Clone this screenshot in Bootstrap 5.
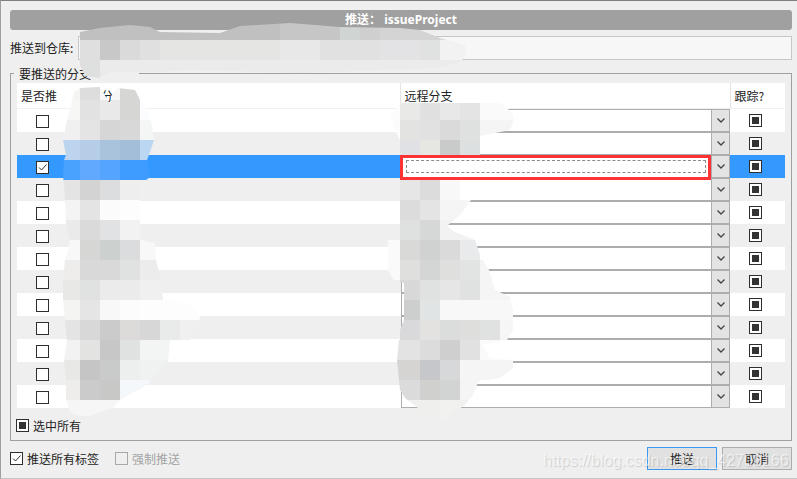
<!DOCTYPE html>
<html lang="zh"><head><meta charset="utf-8"><title>推送</title>
<link href="https://cdn.jsdelivr.net/npm/bootstrap@5.3.0/dist/css/bootstrap.min.css" rel="stylesheet">
<style>
html,body{margin:0;background:#efefef}
body{width:797px;height:479px;overflow:hidden;font:12px/16px "Noto Sans CJK SC","Noto Sans",sans-serif;color:#222}
.dlg{position:relative;width:797px;height:479px;background:#efefef;border-top:1px solid #7f7f7f;border-left:1px solid #a0a0a0;border-bottom:1px solid #c4c4c4;padding:9px 5px 0 9px}
.ttl{height:20px;background:#a0a0a0;border-radius:3px;color:#fff;font:700 12px/20px "Noto Sans","Noto Sans CJK SC",sans-serif;text-align:center}
.repo{height:24px;margin-top:6px}
.repo-lbl{width:68px}
.repo-in{height:24px;border:1px solid #c8c8c8;border-radius:0;background:#f7f7f7;padding:0 4px;font-size:12px}
.grp{position:relative;height:368px;margin-top:13px;border:1px solid #a0a0a0;padding:9px 6px 0}
.grp-t{position:absolute;left:3px;top:-8px;width:125px;padding-left:5px;background:#efefef;line-height:16px}
.brt{table-layout:fixed;width:768px;margin:0;color:#222;font-size:12px;line-height:16px}
.brt>:not(caption)>*>*{padding:0;border:0;box-shadow:none;color:inherit;vertical-align:middle}
.brt thead th{height:25px;font-weight:400;background:#fff;border-bottom:1px solid #f0f0f0;padding:2px 4px 0}
.brt thead .sep{border-left:1px solid #e4e4e4}
.brt tbody td{height:23px}
.brt tbody tr:nth-child(odd)>td{background:#fff}
.brt tbody tr:nth-child(even)>td{background:#efefef}
.brt tbody tr.on>td{background:#39f}
.cb{display:block;appearance:none;margin:0;width:13px;height:13px;border:1px solid #2e2e2e;background:#fff no-repeat center}
.cb-tick{background-image:url("data:image/svg+xml,%3Csvg xmlns='http://www.w3.org/2000/svg' width='11' height='11'%3E%3Cpath d='M2 5.5l2.5 2.5L9.5 2.5' fill='none' stroke='%23333' stroke-width='1'/%3E%3C/svg%3E")}
.cb-tri{background-image:linear-gradient(#333,#333);background-size:7px 7px}
.cb-off{border-color:#a8a8a8;background:#efefef}
.brt td>.cb-l{margin:2px 0 0 19px}
.brt td>.cb-t{margin:0 0 0 19px}
.cmb{position:relative;display:flex;height:23px;width:329px;margin-left:1px;background:#fff;border:1px solid #adadad}
.cmb-txt{flex:1 1 auto}
.cmb-arr{display:flex;align-items:center;justify-content:center;width:18px;background:#e3e3e3;border-left:1px solid #adadad}
.red{position:absolute;z-index:2;left:-2px;top:-1px;width:311px;height:25px;border:3px solid #f33;background:#fff;padding:2px 2px 2px 3px}
.red i{display:block;height:13px;border:1px dashed #8a8a8a}
.sel-all{margin:10px 0 0 -1px;height:16px}
.foot{height:23px;margin-top:6px}
.t-off{color:#a4a4a4}
.act{width:70px;height:23px;padding:0;border-radius:0;background:#e1e1e1;border:1px solid #adadad;color:#222;font-size:12px;line-height:20px}
.act+.act{margin-left:5px}
.act-on{border-color:#3d98f2}
.mos{position:absolute;left:-1px;top:-1px;z-index:1;pointer-events:none}
.wm{position:absolute;z-index:3;left:542px;top:450px;font:16px/20px "Liberation Sans",sans-serif;color:rgba(255,255,255,.62);text-shadow:1px 1px 1px rgba(0,0,0,.14);white-space:nowrap;pointer-events:none}
</style></head><body>
<div class="dlg">
 <div class="ttl">推送： issueProject</div>
 <div class="repo d-flex align-items-center"><div class="repo-lbl flex-shrink-0">推送到仓库:</div><input class="form-control repo-in" type="text" readonly></div>
 <div class="grp">
  <div class="grp-t">要推送的分支</div>
  <table class="table brt">
   <colgroup><col style="width:56px"><col style="width:327px"><col style="width:330px"><col style="width:55px"></colgroup>
   <thead><tr><th>是否推</th><th>本地分支</th><th class="sep">远程分支</th><th class="sep">跟踪?</th></tr></thead>
   <tbody>
    <tr><td><input type="checkbox" class="cb cb-l"></td><td></td><td><div class="cmb"><div class="cmb-txt"></div><div class="cmb-arr"><svg width="8" height="5"><path d="M.5.5L4 4 7.500.5" fill="none" stroke="#444" stroke-width="1.300"/></svg></div></div></td><td><span class="cb cb-tri cb-t d-block"></span></td></tr>
    <tr><td><input type="checkbox" class="cb cb-l"></td><td></td><td><div class="cmb"><div class="cmb-txt"></div><div class="cmb-arr"><svg width="8" height="5"><path d="M.5.5L4 4 7.500.5" fill="none" stroke="#444" stroke-width="1.300"/></svg></div></div></td><td><span class="cb cb-tri cb-t d-block"></span></td></tr>
    <tr class="on"><td><span class="cb cb-l cb-tick d-block"></span></td><td></td><td><div class="cmb"><div class="cmb-txt"></div><div class="red"><i></i></div><div class="cmb-arr"><svg width="8" height="5"><path d="M.5.5L4 4 7.500.5" fill="none" stroke="#444" stroke-width="1.300"/></svg></div></div></td><td><span class="cb cb-tri cb-t d-block"></span></td></tr>
    <tr><td><input type="checkbox" class="cb cb-l"></td><td></td><td><div class="cmb"><div class="cmb-txt"></div><div class="cmb-arr"><svg width="8" height="5"><path d="M.5.5L4 4 7.500.5" fill="none" stroke="#444" stroke-width="1.300"/></svg></div></div></td><td><span class="cb cb-tri cb-t d-block"></span></td></tr>
    <tr><td><input type="checkbox" class="cb cb-l"></td><td></td><td><div class="cmb"><div class="cmb-txt"></div><div class="cmb-arr"><svg width="8" height="5"><path d="M.5.5L4 4 7.500.5" fill="none" stroke="#444" stroke-width="1.300"/></svg></div></div></td><td><span class="cb cb-tri cb-t d-block"></span></td></tr>
    <tr><td><input type="checkbox" class="cb cb-l"></td><td></td><td><div class="cmb"><div class="cmb-txt"></div><div class="cmb-arr"><svg width="8" height="5"><path d="M.5.5L4 4 7.500.5" fill="none" stroke="#444" stroke-width="1.300"/></svg></div></div></td><td><span class="cb cb-tri cb-t d-block"></span></td></tr>
    <tr><td><input type="checkbox" class="cb cb-l"></td><td></td><td><div class="cmb"><div class="cmb-txt"></div><div class="cmb-arr"><svg width="8" height="5"><path d="M.5.5L4 4 7.500.5" fill="none" stroke="#444" stroke-width="1.300"/></svg></div></div></td><td><span class="cb cb-tri cb-t d-block"></span></td></tr>
    <tr><td><input type="checkbox" class="cb cb-l"></td><td></td><td><div class="cmb"><div class="cmb-txt"></div><div class="cmb-arr"><svg width="8" height="5"><path d="M.5.5L4 4 7.500.5" fill="none" stroke="#444" stroke-width="1.300"/></svg></div></div></td><td><span class="cb cb-tri cb-t d-block"></span></td></tr>
    <tr><td><input type="checkbox" class="cb cb-l"></td><td></td><td><div class="cmb"><div class="cmb-txt"></div><div class="cmb-arr"><svg width="8" height="5"><path d="M.5.5L4 4 7.500.5" fill="none" stroke="#444" stroke-width="1.300"/></svg></div></div></td><td><span class="cb cb-tri cb-t d-block"></span></td></tr>
    <tr><td><input type="checkbox" class="cb cb-l"></td><td></td><td><div class="cmb"><div class="cmb-txt"></div><div class="cmb-arr"><svg width="8" height="5"><path d="M.5.5L4 4 7.500.5" fill="none" stroke="#444" stroke-width="1.300"/></svg></div></div></td><td><span class="cb cb-tri cb-t d-block"></span></td></tr>
    <tr><td><input type="checkbox" class="cb cb-l"></td><td></td><td><div class="cmb"><div class="cmb-txt"></div><div class="cmb-arr"><svg width="8" height="5"><path d="M.5.5L4 4 7.500.5" fill="none" stroke="#444" stroke-width="1.300"/></svg></div></div></td><td><span class="cb cb-tri cb-t d-block"></span></td></tr>
    <tr><td><input type="checkbox" class="cb cb-l"></td><td></td><td><div class="cmb"><div class="cmb-txt"></div><div class="cmb-arr"><svg width="8" height="5"><path d="M.5.5L4 4 7.500.5" fill="none" stroke="#444" stroke-width="1.300"/></svg></div></div></td><td><span class="cb cb-tri cb-t d-block"></span></td></tr>
    <tr><td><input type="checkbox" class="cb cb-l"></td><td></td><td><div class="cmb"><div class="cmb-txt"></div><div class="cmb-arr"><svg width="8" height="5"><path d="M.5.5L4 4 7.500.5" fill="none" stroke="#444" stroke-width="1.300"/></svg></div></div></td><td><span class="cb cb-tri cb-t d-block"></span></td></tr>
   </tbody>
  </table>
  <div class="sel-all d-flex align-items-center gap-1"><span class="cb cb-tri"></span><span>选中所有</span></div>
 </div>
 <div class="foot d-flex align-items-center">
  <span class="cb cb-tick"></span><span class="ms-1">推送所有标签</span>
  <span class="cb cb-off ms-3"></span><span class="t-off ms-1">强制推送</span>
  <button type="button" class="btn act act-on ms-auto">推送</button>
  <button type="button" class="btn act">取消</button>
 </div>
 <svg class="mos" width="797" height="479" shape-rendering="crispEdges">
  <defs>
   <clipPath id="cA"><polygon points="80,32 100,28 130,25 150,27 160,32 220,33 240,26 290,23 340,27 400,28 420,30 440,38 465,45 467,55 460,62 440,68 300,73 190,70 160,72 110,72 100,78 85,76 80,65"/></clipPath>
   <clipPath id="cB"><polygon points="74,92 80,88 100,87 103,92 110,104 113,92 118,88 135,90 140,100 147,110 152,125 154,140 150,152 147,160 149,170 149,178 146,180 140,180 140,240 155,243 156,260 161,280 163,300 175,302 190,303 199,315 200,320 190,340 170,340 168,362 150,382 142,388 120,400 113,408 100,412 90,416 80,416 70,412 66,400 66,380 64,360 67,340 65,320 63,300 63,280 65,260 68,250 70,240 66,225 65,200 64,185 63,175 64,160 66,155 63,140 67,120"/></clipPath>
   <clipPath id="cC"><polygon points="400,103 500,103 512,112 514,120 510,130 480,136 480,155 460,180 460,200 471,200 460,215 447,226 455,232 475,240 480,255 489,270 495,290 510,297 513,310 513,330 507,340 482,345 490,358 513,360 513,368 500,378 478,382 473,395 465,405 450,415 440,420 430,420 420,415 418,408 405,398 400,390 397,360 398,350 400,330 404,320 404,283 395,282 388,270 388,240 400,236 400,140 395,130 390,115"/></clipPath>
  </defs>
  <g clip-path="url(#cA)">
   <path fill="#c0c0c0" d="M80 20h200v20H80z"/><path fill="#c6c6c6" d="M280 20h60v20h-60z"/><path fill="#d0d4d2" d="M340 20h20v20h-20z"/><path fill="#cfcfcf" d="M360 20h20v20h-20z"/><path fill="#d4d4d4" d="M380 20h60v20h-60z"/><path fill="#dadada" d="M440 20h30v20h-30z"/>
   <path fill="#dedfde" d="M80 40h20v20H80z"/><path fill="#c8c8c8" d="M100 40h20v20h-20z"/><path fill="#dadada" d="M120 40h20v20h-20z"/><path fill="#e0e0e0" d="M140 40h20v20h-20z"/><path fill="#e5e5e3" d="M160 40h120v20H160z"/><path fill="#e8e8e8" d="M280 40h40v20h-40z"/><path fill="#e1e1e1" d="M320 40h60v20h-60z"/><path fill="#e3e3e5" d="M380 40h40v20h-40z"/><path fill="#e0e2e2" d="M420 40h20v20h-20z"/><path fill="#f2f2f2" d="M440 40h30v20h-30z"/>
   <path fill="#dee0df" d="M80 60h20v20H80z"/><path fill="#ebebeb" d="M100 60h370v20H100z"/>
  </g>
  <g clip-path="url(#cB)">
   <path fill="#f5f5f4" d="M60 80h20v20H60z"/><path fill="#dddddd" d="M80 80h20v20H80z"/><path fill="#f7f7f7" d="M100 80h20v20h-20z"/><path fill="#d6d6d4" d="M120 80h20v20h-20z"/>
   <path fill="#f7f7f6" d="M60 100h20v20H60z"/><path fill="#e2e2e2" d="M80 100h20v20H80z"/><path fill="#e9e9e9" d="M100 100h20v20h-20z"/><path fill="#d6d6d4" d="M120 100h20v20h-20z"/><path fill="#fafcfd" d="M140 100h20v20h-20z"/>
   <path fill="#f0f0f0" d="M60 120h20v20H60z"/><path fill="#e4e4e4" d="M80 120h20v20H80z"/><path fill="#d6d6d6" d="M100 120h20v20h-20z"/><path fill="#d8d8d8" d="M120 120h20v20h-20z"/><path fill="#f4f5f5" d="M140 120h20v20h-20z"/>
   <path fill="#bcd4ee" d="M60 140h20v20H60z"/><path fill="#b5cde6" d="M80 140h20v20H80z"/><path fill="#a9c3dd" d="M100 140h20v20h-20z"/><path fill="#a3bed8" d="M120 140h20v20h-20z"/><path fill="#bbd6f2" d="M140 140h20v20h-20z"/>
   <path fill="#4aa2ff" d="M60 160h20v20H60z"/><path fill="#60a9ff" d="M80 160h20v20H80z"/><path fill="#55a5ff" d="M100 160h20v20h-20z"/><path fill="#3e9bff" d="M120 160h40v20h-40z"/>
   <path fill="#e4e4e4" d="M60 180h20v20H60z"/><path fill="#d3d3d3" d="M80 180h20v20H80z"/><path fill="#dcdddf" d="M100 180h20v20h-20z"/><path fill="#eeeeee" d="M120 180h20v20h-20z"/>
   <path fill="#f4f4f4" d="M60 200h20v20H60z"/><path fill="#e4e4e4" d="M80 200h20v20H80z"/><path fill="#fbfbfb" d="M100 200h20v20h-20z"/><path fill="#fdfdfd" d="M120 200h20v20h-20z"/>
   <path fill="#eaeaea" d="M60 220h20v20H60z"/><path fill="#dadada" d="M80 220h20v20H80z"/><path fill="#e0e2e4" d="M100 220h20v20h-20z"/><path fill="#f2f2f3" d="M120 220h20v20h-20z"/>
   <path fill="#f8f8f8" d="M60 240h20v20H60z"/><path fill="#d6d6d4" d="M80 240h20v20H80z"/><path fill="#ccd0cf" d="M100 240h20v20h-20z"/><path fill="#dadcde" d="M120 240h20v20h-20z"/><path fill="#f8f8f8" d="M140 240h20v20h-20z"/>
   <path fill="#eeedeb" d="M60 260h20v20H60z"/><path fill="#d9d9d9" d="M80 260h40v20H80z"/><path fill="#e0e2e2" d="M120 260h20v20h-20z"/><path fill="#ececec" d="M140 260h20v20h-20z"/>
   <path fill="#e8e8e6" d="M60 280h20v20H60z"/><path fill="#dfe2e1" d="M80 280h20v20H80z"/><path fill="#ebebeb" d="M100 280h40v20h-40z"/><path fill="#f0f0f0" d="M140 280h30v20h-30z"/>
   <path fill="#f4f4f2" d="M60 300h20v20H60z"/><path fill="#e5e5e5" d="M80 300h20v20H80z"/><path fill="#f8f8f8" d="M100 300h20v20h-20z"/><path fill="#fcfcfc" d="M120 300h20v20h-20z"/><path fill="#fdfdfd" d="M140 300h60v20h-60z"/>
   <path fill="#e4e4e4" d="M60 320h20v20H60z"/><path fill="#d8d8d8" d="M80 320h20v20H80z"/><path fill="#cbcbcb" d="M100 320h20v20h-20z"/><path fill="#dcdbd9" d="M120 320h20v20h-20z"/><path fill="#d7d7d7" d="M140 320h20v20h-20z"/><path fill="#e9ebeb" d="M160 320h20v20h-20z"/><path fill="#f0f0f0" d="M180 320h20v20h-20z"/>
   <path fill="#f2f2f2" d="M60 340h20v20H60z"/><path fill="#e3e3e1" d="M80 340h20v20H80z"/><path fill="#c7c7c7" d="M100 340h20v20h-20z"/><path fill="#dfe2e1" d="M120 340h20v20h-20z"/><path fill="#f3f5f5" d="M140 340h30v20h-30z"/>
   <path fill="#e8e8e6" d="M60 360h20v20H60z"/><path fill="#c5c5c5" d="M80 360h20v20H80z"/><path fill="#c8cbca" d="M100 360h20v20h-20z"/><path fill="#edefef" d="M120 360h20v20h-20z"/><path fill="#f0f1f1" d="M140 360h30v20h-30z"/>
   <path fill="#eeedeb" d="M60 380h20v20H60z"/><path fill="#cbcbcb" d="M80 380h20v20H80z"/><path fill="#c8c8c6" d="M100 380h20v20h-20z"/><path fill="#f5f8fb" d="M120 380h30v20h-30z"/>
   <path fill="#f6f6f6" d="M60 400h60v20H60z"/>
  </g>
  <g clip-path="url(#cC)">
   <path fill="#fcfcfc" d="M380 100h20v60h-20z"/><path fill="#e9e9e7" d="M400 100h20v20h-20z"/><path fill="#e0e0e0" d="M420 100h20v20h-20z"/><path fill="#e8e8e8" d="M440 100h20v20h-20z"/><path fill="#e4e4e4" d="M460 100h20v20h-20z"/><path fill="#fafafa" d="M480 100h40v20h-40z"/>
   <path fill="#e3e3e1" d="M400 120h20v20h-20z"/><path fill="#e1e1e1" d="M420 120h20v20h-20z"/><path fill="#dadada" d="M440 120h20v20h-20z"/><path fill="#dfe1e0" d="M460 120h20v20h-20z"/><path fill="#f5f5f5" d="M480 120h40v20h-40z"/>
   <path fill="#dfe1e4" d="M400 140h20v20h-20z"/><path fill="#e6e6e2" d="M420 140h20v20h-20z"/><path fill="#c9cbca" d="M440 140h20v20h-20z"/><path fill="#dde0e0" d="M460 140h20v20h-20z"/>
   <path fill="#e6e6e6" d="M400 180h20v20h-20z"/><path fill="#dcdcdc" d="M420 180h20v20h-20z"/><path fill="#f8f8f8" d="M440 180h40v20h-40z"/>
   <path fill="#dcdcdc" d="M400 200h20v20h-20z"/><path fill="#e4e4e4" d="M420 200h20v20h-20z"/><path fill="#f5f5f5" d="M440 200h40v20h-40z"/>
   <path fill="#dfe0e0" d="M400 220h20v20h-20z"/><path fill="#d6d8d7" d="M420 220h20v20h-20z"/><path fill="#f2f2f2" d="M440 220h40v20h-40z"/>
   <path fill="#fafafa" d="M380 240h20v40h-20z"/><path fill="#d9d9d7" d="M400 240h20v20h-20z"/><path fill="#d0d2d1" d="M420 240h20v20h-20z"/><path fill="#dadada" d="M440 240h20v20h-20z"/><path fill="#e9eaec" d="M460 240h20v20h-20z"/>
   <path fill="#dfdfdd" d="M400 260h20v20h-20z"/><path fill="#d4d6d5" d="M420 260h20v20h-20z"/><path fill="#dfdfdd" d="M440 260h20v20h-20z"/><path fill="#e2e3e3" d="M460 260h20v20h-20z"/><path fill="#f5f5f5" d="M480 260h40v40h-40z"/>
   <path fill="#d8d8d8" d="M400 280h20v20h-20z"/><path fill="#e0e1e1" d="M420 280h20v20h-20z"/><path fill="#e6e6e6" d="M440 280h20v20h-20z"/><path fill="#dfe2e1" d="M460 280h20v20h-20z"/>
   <path fill="#cdcfce" d="M400 300h20v20h-20z"/><path fill="#e0e4e4" d="M420 300h20v20h-20z"/><path fill="#f8f8f8" d="M440 300h80v20h-80z"/>
   <path fill="#d9d9db" d="M400 320h20v20h-20z"/><path fill="#e3e2e0" d="M420 320h20v20h-20z"/><path fill="#dadddc" d="M440 320h20v20h-20z"/><path fill="#dededc" d="M460 320h20v20h-20z"/><path fill="#dfe2e1" d="M480 320h20v20h-20z"/><path fill="#f6f6f6" d="M500 320h20v20h-20z"/>
   <path fill="#e3e3e3" d="M395 340h25v20h-25z"/><path fill="#dcdcdc" d="M420 340h20v20h-20z"/><path fill="#cfcfcf" d="M440 340h20v20h-20z"/><path fill="#e1e1e1" d="M460 340h20v20h-20z"/><path fill="#fafafa" d="M480 340h40v20h-40z"/>
   <path fill="#d6d4d2" d="M395 360h25v20h-25z"/><path fill="#c5c7ca" d="M420 360h20v20h-20z"/><path fill="#d6d8da" d="M440 360h20v20h-20z"/><path fill="#f5f5f5" d="M460 360h60v20h-60z"/>
   <path fill="#dbdbdb" d="M395 380h25v20h-25z"/><path fill="#d0d0ce" d="M420 380h20v20h-20z"/><path fill="#d2d4d3" d="M440 380h20v20h-20z"/><path fill="#f5f5f5" d="M460 380h20v20h-20z"/>
   <path fill="#efefed" d="M400 400h40v20h-40z"/><path fill="#f1f1f0" d="M440 400h30v20h-30z"/>
  </g>
 </svg>
 <div class="wm">https://blog.csdn.net/qq_42700166</div>
</div>
</body></html>
